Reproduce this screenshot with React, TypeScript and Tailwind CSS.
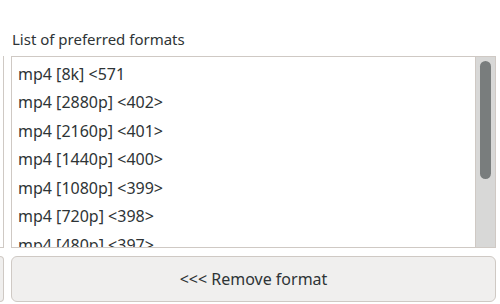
import React from "react";

const rows = [
  "mp4 [8k] <571",
  "mp4 [2880p] <402>",
  "mp4 [2160p] <401>",
  "mp4 [1440p] <400>",
  "mp4 [1080p] <399>",
  "mp4 [720p] <398>",
  "mp4 [480p] <397>",
];

export default function App() {
  return (
    <div
      className="w-[500px] h-[304px] bg-white overflow-hidden flex text-[#2e3436]"
      style={{ fontFamily: '"Noto Sans", "Open Sans", sans-serif' }}
    >
      <div className="w-[4px] flex flex-col pt-[56px]">
        <div className="h-[192px] border-r border-b border-[#cfc9c4] bg-white" />
        <div className="mt-[8px] h-[46px] border-r border-t border-b border-[#cfc9c4] rounded-r-[6px] bg-[#f0efee]" />
      </div>
      <div className="ml-[7px] w-[485px] flex flex-col">
        <div className="h-[56px] flex items-end pb-[7px] pl-[1px] text-[15px] leading-[20px]">
          List of preferred formats
        </div>
        <div className="h-[192px] border border-[#cfc9c4] flex bg-white">
          <div className="flex-1 overflow-hidden pl-[6px] pt-[2.5px]">
            {rows.map((r) => (
              <div key={r} className="h-[28.5px] flex items-center text-[16px] whitespace-pre">
                {r}
              </div>
            ))}
          </div>
          <div className="w-[20px] bg-[#d8d8d7] border-l border-[#cfc9c4] flex justify-center pt-[4px]">
            <div className="w-[11px] h-[118px] rounded-full bg-[#797d7d]" />
          </div>
        </div>
        <button className="mt-[8px] h-[46px] border border-[#cfc9c4] rounded-[6px] bg-[#f0efee] text-[16px] flex items-center justify-center">
          &lt;&lt;&lt; Remove format
        </button>
      </div>
    </div>
  );
}
